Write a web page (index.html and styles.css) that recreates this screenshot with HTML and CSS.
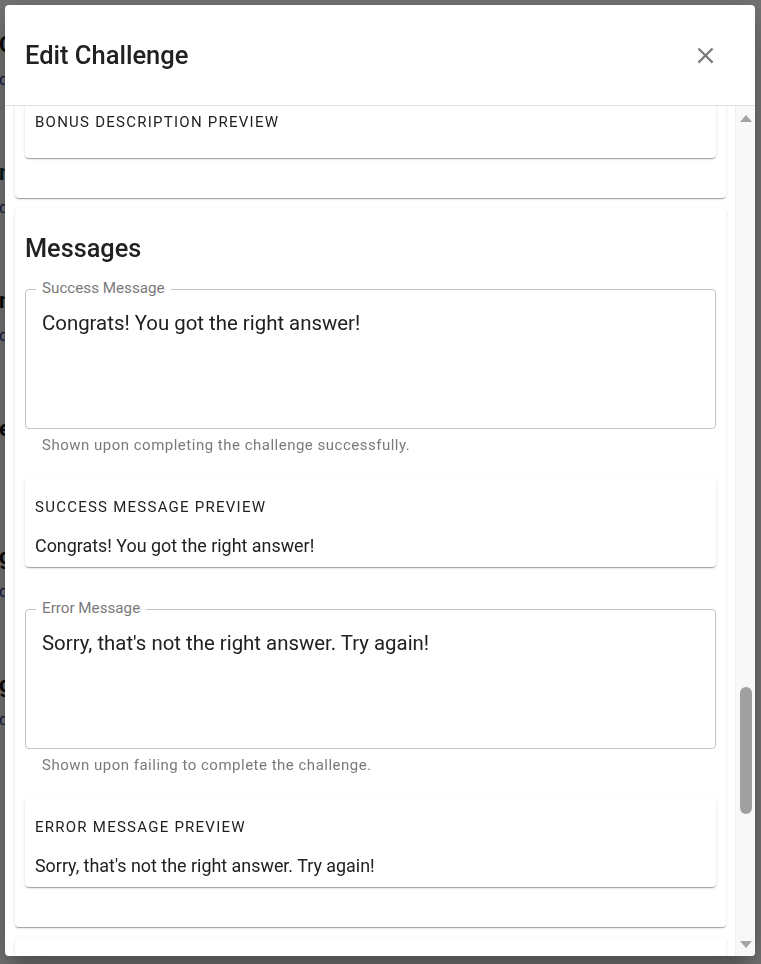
FILE: index.html
```html
<!DOCTYPE html>
<html lang="en">
<head>
<meta charset="utf-8">
<title>Edit Challenge</title>
<link rel="stylesheet" href="styles.css">
</head>
<body>
  <div class="page">
    <div class="bg-item"><div class="bg-title">Ch</div><div class="bg-desc">co</div></div>
    <div class="bg-item"><div class="bg-title teal">nu</div><div class="bg-desc">de</div></div>
    <div class="bg-item"><div class="bg-title">na</div><div class="bg-desc">ch</div></div>
    <div class="bg-item"><div class="bg-title">em</div><div class="bg-desc"></div></div>
    <div class="bg-item"><div class="bg-title">gu</div><div class="bg-desc">co</div></div>
    <div class="bg-item"><div class="bg-title">ge</div><div class="bg-desc">dr</div></div>
  </div>

  <div class="backdrop"></div>

  <div class="dialog" role="dialog" aria-labelledby="dlg-title">
    <header class="dialog-header">
      <h1 id="dlg-title" class="dialog-title">Edit Challenge</h1>
      <button class="close-btn" aria-label="Close">
        <svg viewBox="0 0 24 24" width="27" height="27" aria-hidden="true"><path d="M19 6.41 17.59 5 12 10.59 6.41 5 5 6.41 10.59 12 5 17.59 6.41 19 12 13.41 17.59 19 19 17.59 13.41 12z"/></svg>
      </button>
    </header>

    <div class="dialog-body">
      <div class="scroll-area">
        <section class="card card-partial">
          <div class="preview">
            <div class="preview-title">Bonus Description Preview</div>
            <div class="preview-text"></div>
          </div>
        </section>

        <section class="card">
          <h2 class="card-heading">Messages</h2>

          <div class="field field-first">
            <label class="field-label">Success Message</label>
            <div class="field-input">Congrats! You got the right answer!</div>
          </div>
          <p class="helper">Shown upon completing the challenge successfully.</p>

          <div class="preview">
            <div class="preview-title">Success Message Preview</div>
            <div class="preview-text">Congrats! You got the right answer!</div>
          </div>

          <div class="field field-next">
            <label class="field-label">Error Message</label>
            <div class="field-input">Sorry, that's not the right answer. Try again!</div>
          </div>
          <p class="helper">Shown upon failing to complete the challenge.</p>

          <div class="preview preview-last">
            <div class="preview-title">Error Message Preview</div>
            <div class="preview-text">Sorry, that's not the right answer. Try again!</div>
          </div>
        </section>

        <section class="card card-tail"></section>
      </div>

      <div class="scrollbar" aria-hidden="true">
        <div class="sb-btn"><span class="tri tri-up"></span></div>
        <div class="sb-track"><div class="sb-thumb"></div></div>
        <div class="sb-btn"><span class="tri tri-down"></span></div>
      </div>
    </div>
  </div>
</body>
</html>
```

FILE: styles.css
```css
* { box-sizing: border-box; }

html, body {
  margin: 0;
  height: 964px;
  overflow: hidden;
}

body {
  font-family: Roboto, "Noto Sans", "Liberation Sans", sans-serif;
  color: #212121;
  background: #ffffff;
}

/* background page (mostly hidden behind the dialog) */
.page {
  padding-top: 30px;
  margin-left: -1px;
}
.bg-item {
  height: 128px;
}
.bg-title {
  height: 30px;
  line-height: 30px;
  font-size: 22px;
  font-weight: 700;
  color: #111111;
  white-space: nowrap;
}
.bg-title.teal { color: #0b3b40; }
.bg-desc {
  height: 40px;
  line-height: 40px;
  font-size: 16px;
  color: #2b3f9e;
  white-space: nowrap;
}

.backdrop {
  position: fixed;
  inset: 0;
  background: rgba(0, 0, 0, 0.55);
}

/* dialog */
.dialog {
  position: fixed;
  top: 5px;
  left: 5px;
  width: 750px;
  height: 951px;
  background: #ffffff;
  border-radius: 4px;
  overflow: hidden;
  display: flex;
  flex-direction: column;
  box-shadow: 0 11px 15px -7px rgba(0,0,0,0.2), 0 24px 38px 3px rgba(0,0,0,0.14), 0 9px 46px 8px rgba(0,0,0,0.12);
}

.dialog-header {
  flex: none;
  height: 101px;
  border-bottom: 1px solid #e0e0e0;
  display: flex;
  align-items: center;
  justify-content: space-between;
  padding: 0 36px 0 20px;
}
.dialog-title {
  margin: 0;
  font-size: 25.5px;
  font-weight: 500;
  line-height: 32px;
  color: #212121;
}
.close-btn {
  border: 0;
  background: none;
  padding: 0;
  width: 27px;
  height: 27px;
  display: flex;
  align-items: center;
  justify-content: center;
  cursor: pointer;
}
.close-btn svg { fill: #7a7a7a; display: block; }

.dialog-body {
  flex: 1;
  min-height: 0;
  display: flex;
}

.scroll-area {
  flex: 1;
  min-width: 0;
  overflow: hidden;
  padding: 0 9px 0 10px;
}

/* cards */
.card {
  background: #ffffff;
  border-radius: 4px;
  padding: 10px;
  margin-top: 10px;
  box-shadow: 0 2px 1px -1px rgba(0,0,0,0.2), 0 1px 1px 0 rgba(0,0,0,0.14), 0 1px 3px 0 rgba(0,0,0,0.12);
}
.card-partial {
  margin-top: -23px;
}
.card-partial .preview {
  margin-top: 0;
  margin-bottom: 30px;
}
.card-tail {
  height: 60px;
}

.card-heading {
  margin: 15px 0 0;
  font-size: 25.3px;
  font-weight: 500;
  line-height: 32px;
  color: #212121;
}

/* outlined multiline field */
.field {
  position: relative;
  height: 140px;
  border: 1px solid #c4c4c4;
  border-radius: 4px;
  padding: 20px 16px 18px;
}
.field-first { margin-top: 24px; }
.field-next { margin-top: 42px; }

.field-label {
  position: absolute;
  top: -11px;
  left: 10px;
  padding: 0 6px;
  background: #ffffff;
  font-size: 15.2px;
  line-height: 18px;
  color: #7a7a7a;
}
.field-input {
  font-size: 20.4px;
  line-height: 27px;
  color: #212121;
}

.helper {
  margin: 5px 0 0 17px;
  font-size: 15px;
  line-height: 23px;
  letter-spacing: 0.0333em;
  color: #7a7a7a;
}

/* preview cards */
.preview {
  margin-top: 21px;
  background: #ffffff;
  border-radius: 4px;
  padding: 11px 10px 9px;
  box-shadow: 0 2px 1px -1px rgba(0,0,0,0.2), 0 1px 1px 0 rgba(0,0,0,0.14), 0 1px 3px 0 rgba(0,0,0,0.12);
}
.preview-last { margin-bottom: 30px; }
.preview-title {
  font-size: 15px;
  line-height: 37px;
  letter-spacing: 0.0833em;
  text-transform: uppercase;
  color: #212121;
}
.preview-text {
  margin-top: 8px;
  font-size: 17.9px;
  line-height: 24px;
  color: #212121;
}

/* scrollbar */
.scrollbar {
  flex: none;
  width: 20px;
  background: #f8f8f8;
  border-left: 1px solid #efefef;
  display: flex;
  flex-direction: column;
}
.sb-btn {
  flex: none;
  height: 24px;
  display: flex;
  align-items: center;
  justify-content: center;
}
.tri {
  width: 0;
  height: 0;
  border-left: 6px solid transparent;
  border-right: 6px solid transparent;
}
.tri-up { border-bottom: 7px solid #a3a3a3; }
.tri-down { border-top: 7px solid #a3a3a3; }
.sb-track {
  flex: 1;
  display: flex;
  flex-direction: column;
  align-items: center;
}
.sb-thumb {
  margin-top: 557px;
  width: 12px;
  height: 127px;
  border-radius: 6px;
  background: #a0a0a0;
}
```
